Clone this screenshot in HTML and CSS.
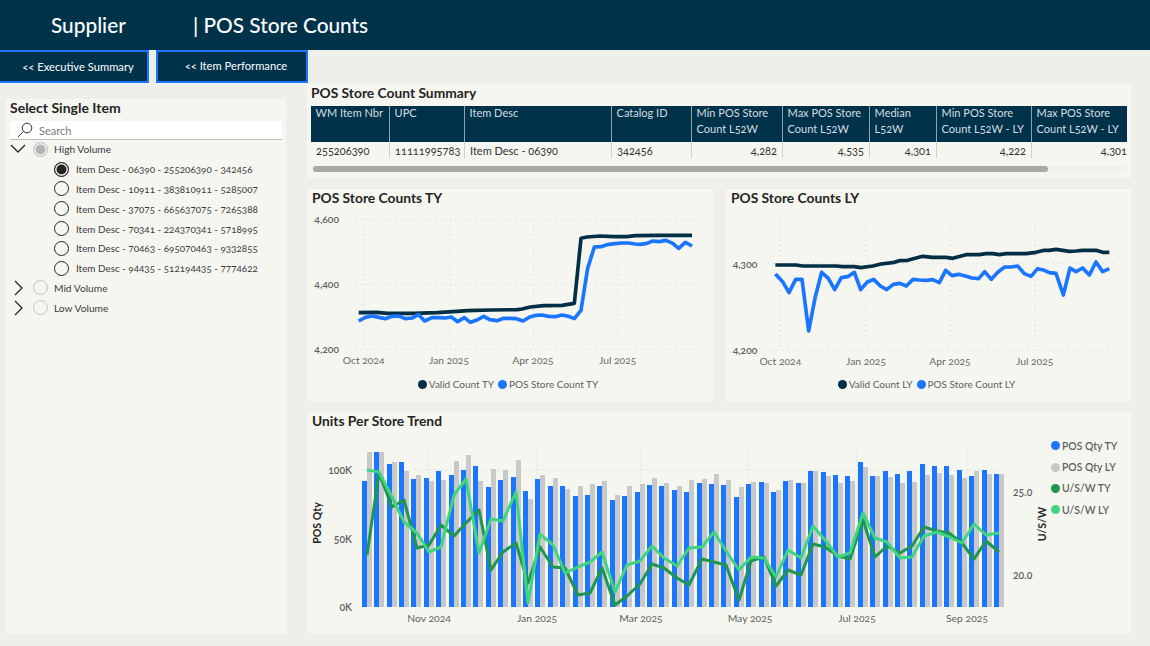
FILE: index.html
```html
<!DOCTYPE html>
<html lang="en">
<head>
<meta charset="utf-8">
<title>POS Store Counts</title>
<link rel="stylesheet" href="styles.css">
</head>
<body>
<header class="top">
  <div class="brand">Supplier</div>
  <div class="page-title">| POS Store Counts</div>
</header>
<nav class="nav">
  <a class="nav-btn nav-first">&lt;&lt; Executive Summary</a>
  <a class="nav-btn nav-second">&lt;&lt; Item Performance</a>
</nav>
<div class="content">
  <aside class="slicer">
    <h2 class="slicer-title">Select Single Item</h2>
    <div class="search">
      <svg class="search-icon" viewBox="0 0 16 16"><circle cx="10" cy="6" r="4.8"/><path d="M6.5 9.5 1 15"/></svg>
      <span>Search</span>
    </div>
    <ul class="tree">
      <li class="node"><svg class="chev" viewBox="0 0 16 16"><path d="M1 4l7 7 7-7"/></svg><span class="radio parent on"></span><span>High Volume</span></li>
      <li class="leaf"><span class="radio sel"></span><span>Item Desc - 06390 - 255206390 - 342456</span></li>
      <li class="leaf"><span class="radio"></span><span>Item Desc - 10911 - 383810911 - 5285007</span></li>
      <li class="leaf"><span class="radio"></span><span>Item Desc - 37075 - 665637075 - 7265388</span></li>
      <li class="leaf"><span class="radio"></span><span>Item Desc - 70341 - 224370341 - 5718995</span></li>
      <li class="leaf"><span class="radio"></span><span>Item Desc - 70463 - 695070463 - 9332855</span></li>
      <li class="leaf"><span class="radio"></span><span>Item Desc - 94435 - 512194435 - 7774622</span></li>
      <li class="node"><svg class="chev" viewBox="0 0 16 16"><path d="M5 1l7 7-7 7"/></svg><span class="radio parent"></span><span>Mid Volume</span></li>
      <li class="node"><svg class="chev" viewBox="0 0 16 16"><path d="M5 1l7 7-7 7"/></svg><span class="radio parent"></span><span>Low Volume</span></li>
    </ul>
  </aside>
  <main class="main">
    <section class="panel summary">
      <h2 class="panel-title">POS Store Count Summary</h2>
      <div class="table">
        <div class="th">WM Item Nbr</div><div class="th">UPC</div><div class="th">Item Desc</div><div class="th">Catalog ID</div><div class="th">Min POS Store Count L52W</div><div class="th">Max POS Store Count L52W</div><div class="th">Median L52W</div><div class="th">Min POS Store Count L52W - LY</div><div class="th">Max POS Store Count L52W - LY</div>
        <div class="td">255206390</div><div class="td num">11111995783</div><div class="td">Item Desc - 06390</div><div class="td">342456</div><div class="td num">4,282</div><div class="td num">4,535</div><div class="td num">4,301</div><div class="td num">4,222</div><div class="td num">4,301</div>
      </div>
      <div class="scroll"><div class="thumb"></div></div>
    </section>
    <div class="chart-row">
      <section class="panel chart">
        <h2 class="panel-title">POS Store Counts TY</h2>
        <svg class="plot" viewBox="0 66 1218 489">
          <path class="grid" d="M130 103H1172M130 298H1172M130 493H1172M170 103V493M428 103V493M680 103V493M932 103V493"/>
          <g class="tick tick-bold"><text x="22" y="115">4,600</text><text x="22" y="310">4,400</text><text x="22" y="505">4,200</text></g>
          <g class="tick mid"><text x="170" y="537">Oct 2024</text><text x="426" y="537">Jan 2025</text><text x="678" y="537">Apr 2025</text><text x="932" y="537">Jul 2025</text></g>
          <polyline class="ln dark" points="155,383 210,382 240,385 320,385 390,383 450,379 480,377 550,375 630,374 645,372 670,366 710,362 765,361 802,355 822,160 840,156 880,153 920,155 960,155 985,152 1050,151 1155,151"/>
          <polyline class="ln blue" points="155,408 175,397 195,393 215,397 235,401 255,394 275,393 295,401 315,399 335,389 353,408 375,398 395,398 415,399 433,396 452,410 472,398 490,412 510,405 530,394 548,404 570,407 590,400 610,400 628,401 648,408 668,396 688,391 705,390 725,394 745,395 765,390 785,394 802,401 822,376 842,250 862,186 882,185 900,179 925,176 945,174 965,174 985,177 1000,178 1020,175 1037,168 1057,170 1077,166 1097,175 1115,190 1135,172 1155,183"/>
        </svg>
        <div class="legend"><span class="dot c-dark"></span><span>Valid Count TY</span><span class="dot c-blue"></span><span>POS Store Count TY</span></div>
      </section>
      <section class="panel chart">
        <h2 class="panel-title">POS Store Counts LY</h2>
        <svg class="plot" viewBox="0 66 1215 489">
          <path class="grid" d="M125 235H1165M125 495H1165M163 105V495M420 105V495M672 105V495M926 105V495"/>
          <g class="tick tick-bold"><text x="20" y="248">4,300</text><text x="20" y="508">4,200</text></g>
          <g class="tick mid"><text x="163" y="540">Oct 2024</text><text x="420" y="540">Jan 2025</text><text x="672" y="540">Apr 2025</text><text x="926" y="540">Jul 2025</text></g>
          <polyline class="ln dark" points="148,240 210,240 230,243 330,243 350,245 385,245 405,248 440,243 465,237 505,232 520,227 545,226 590,214 620,217 660,217 680,220 720,209 760,209 780,206 800,206 820,209 840,206 900,206 930,202 955,196 970,196 990,193 1030,199 1050,198 1070,196 1110,196 1130,202 1150,202"/>
          <polyline class="ln blue" points="148,267 170,290 189,323 209,283 228,283 248,438 268,335 287,262 307,280 326,314 346,278 365,275 385,262 404,314 424,291 443,283 463,303 482,314 502,298 522,295 541,303 561,283 580,285 600,286 620,284 640,293 659,256 678,272 698,268 718,273 738,279 758,281 776,260 796,283 816,261 836,246 855,246 875,243 895,266 915,274 935,251 955,256 970,263 990,265 1012,330 1032,249 1050,260 1070,249 1090,270 1110,231 1130,260 1150,251"/>
        </svg>
        <div class="legend"><span class="dot c-dark"></span><span>Valid Count LY</span><span class="dot c-blue"></span><span>POS Store Count LY</span></div>
      </section>
    </div>
    <section class="panel trend">
      <h2 class="panel-title">Units Per Store Trend</h2>
      <div class="trend-body">
        <svg class="trend-plot" viewBox="307 430 745 203">
          <path class="grid-fine" d="M358 470H1006M358 539H1006M429 445V607M537 445V607M641 445V607M749 445V607M857 445V607M967 445V607"/>
          <g class="tock tock-bold end"><text x="352" y="474">100K</text><text x="352" y="543">50K</text><text x="352" y="611">0K</text></g>
          <g class="tock mid"><text x="429" y="622">Nov 2024</text><text x="537" y="622">Jan 2025</text><text x="641" y="622">Mar 2025</text><text x="750" y="622">May 2025</text><text x="857" y="622">Jul 2025</text><text x="967" y="622">Sep 2025</text></g>
          <g class="tock tock-bold"><text x="1013" y="496">25.0</text><text x="1013" y="579">20.0</text></g>
          <text class="axis-name" transform="translate(321 523) rotate(-90)">POS Qty</text>
          <text class="axis-name" transform="translate(1046 524) rotate(-90)">U/S/W</text>
          <path class="bars-gray" d="M369.5 452V607M381.5 452V607M394.5 462V607M406.5 471V607M418.5 475V607M431.5 481V607M443.5 480V607M456.5 461V607M468.5 455V607M480.5 481V607M493.5 469V607M505.5 470V607M518.5 460V607M530.5 499V607M542.5 475V607M555.5 478V607M567.5 489V607M580.5 486V607M592.5 484V607M604.5 481V607M617.5 495V607M629.5 486V607M642.5 484V607M654.5 478V607M666.5 483V607M679.5 486V607M691.5 480V607M704.5 479V607M716.5 474V607M728.5 480V607M741.5 487V607M753.5 482V607M766.5 483V607M778.5 490V607M790.5 480V607M803.5 483V607M815.5 471V607M828.5 476V607M840.5 483V607M852.5 481V607M865.5 467V607M877.5 476V607M890.5 477V607M902.5 483V607M914.5 482V607M927.5 475V607M939.5 473V607M951.5 475V607M964.5 478V607M976.5 471V607M989.5 474V607M1001.5 474V607"/>
          <path class="bars-blue" d="M364.5 481V607M376.5 452V607M389.5 464V607M401.5 462V607M413.5 479V607M426.5 478V607M438.5 471V607M451.5 475V607M463.5 470V607M475.5 466V607M488.5 487V607M500.5 480V607M513.5 477V607M525.5 491V607M537.5 479V607M550.5 486V607M562.5 486V607M575.5 496V607M587.5 495V607M599.5 486V607M612.5 500V607M624.5 496V607M637.5 492V607M649.5 485V607M661.5 486V607M674.5 490V607M686.5 492V607M699.5 483V607M711.5 484V607M723.5 485V607M736.5 497V607M748.5 484V607M761.5 482V607M773.5 492V607M785.5 481V607M798.5 483V607M810.5 471V607M823.5 472V607M835.5 475V607M847.5 476V607M860.5 462V607M872.5 476V607M885.5 471V607M897.5 474V607M909.5 471V607M922.5 464V607M934.5 466V607M946.5 466V607M959.5 470V607M971.5 476V607M984.5 470V607M996.5 474V607"/>
          <polyline class="ln2 g-dark" points="367,555 379,473 392,507 404,500 417,548 429,545 441,525 454,536 466,523 479,510 491,570 503,552 516,543 528,583 540,547 553,567 565,568 578,595 590,593 602,568 615,605 627,596 640,584 652,564 664,568 677,578 689,585 702,559 714,562 726,565 739,600 751,561 764,557 776,586 788,570 801,575 813,544 825,547 838,556 850,559 863,520 875,557 887,546 900,553 912,546 924,527 937,531 949,533 962,543 974,559 986,541 999,552"/>
          <polyline class="ln2 g-light" points="367,470 379,472 392,497 404,522 417,533 429,552 441,547 454,495 466,479 479,553 491,519 503,521 516,492 528,603 540,534 553,545 565,573 578,567 590,562 602,552 615,592 627,565 640,561 652,546 664,558 677,566 689,548 702,547 714,532 726,551 739,570 751,557 764,558 776,577 788,550 801,558 813,526 825,540 838,557 850,553 863,513 875,538 887,542 900,558 912,557 924,536 937,532 949,537 962,543 974,524 986,535 999,533"/>
        </svg>
        <ul class="side-legend">
          <li><span class="dot c-blue"></span>POS Qty TY</li>
          <li><span class="dot c-gray"></span>POS Qty LY</li>
          <li><span class="dot c-green"></span>U/S/W TY</li>
          <li><span class="dot c-lime"></span>U/S/W LY</li>
        </ul>
      </div>
    </section>
  </main>
</div>
</body>
</html>
```
FILE: styles.css
```css
* { box-sizing: border-box; }
html, body { margin: 0; padding: 0; }
body {
  width: 1150px;
  height: 646px;
  overflow: hidden;
  background: #eeeeea;
  color: #252423;
  font-family: "Lato", "Open Sans", sans-serif;
  font-feature-settings: "onum" 1;
  font-variant-numeric: oldstyle-nums;
}
.top {
  height: 50px;
  background: #00324a;
  color: #fff;
  display: flex;
  align-items: center;
  padding: 0 0 2px 51px;
  font-size: 20.8px;
  font-weight: 500;
}
.brand { width: 142px; }
.nav { height: 34px; display: flex; }
.nav-btn {
  height: 33px;
  background: #00324a;
  border: 2px solid #1a75ff;
  color: #fff;
  font-size: 11.2px;
  display: flex;
  align-items: center;
  justify-content: center;
}
.nav-first { width: 151px; margin-left: -2px; padding-left: 9px; }
.nav-second { width: 152px; margin-left: 7px; padding: 0 0 2px 8px; }
.content { display: flex; height: 562px; }
.slicer {
  width: 280px;
  height: 535px;
  margin: 15px 0 0 6px;
  background: #f6f6f1;
  padding: 0 4px;
}
.slicer-title { margin: 0; font-size: 14px; font-weight: 700; line-height: 18px; }
.search {
  height: 19px;
  margin-top: 4px;
  background: #fff;
  border-bottom: 1px solid #bdbdbd;
  display: flex;
  align-items: center;
  font-size: 11px;
  color: #7a7a7a;
  padding-left: 7px;
}
.search-icon { width: 16px; height: 16px; margin-right: 6px; fill: none; stroke: #333; stroke-width: 1; }
.tree { list-style: none; margin: -0.5px 0 0; padding: 0; font-size: 10.2px; color: #3a3a3a; }
.node, .leaf { height: 19.8px; display: flex; align-items: center; }
.leaf { padding-left: 44px; font-size: 9.9px; }
.chev { width: 16px; height: 16px; margin-right: 7px; fill: none; stroke: #252423; stroke-width: 1.3; flex: none; }
.radio {
  width: 15px;
  height: 15px;
  border-radius: 50%;
  border: 1.4px solid #252423;
  margin-right: 7px;
  flex: none;
}
.radio.parent { border-color: #c4c4c4; border-width: 1.5px; margin-right: 6px; }
.radio.parent.on { background: #b3b3b3; box-shadow: inset 0 0 0 1.5px #f6f6f1; }
.radio.sel { background: #252423; box-shadow: inset 0 0 0 1.5px #f6f6f1; }
.main { width: 824px; margin-left: 21px; display: flex; flex-direction: column; gap: 11px; }
.panel { background: #f6f6f1; }
.panel-title { margin: 0; padding-left: 5px; font-size: 13.8px; font-weight: 700; line-height: 18px; }
.summary { height: 94px; padding: 0 4px; }
.summary .panel-title { padding-left: 0; margin-bottom: 4px; }
.table {
  display: grid;
  grid-template-columns: 79px 75px 147px 80px 91px 87px 67px 95px 101px;
  width: 816px;
  overflow: hidden;
  font-size: 11px;
}
.th {
  height: 36px;
  background: #00324a;
  color: #d5dde2;
  border-right: 1px solid #8fa3ae;
  padding: 0 2px 0 4.6px;
  line-height: 16px;
  overflow: hidden;
}
.th::before { content: ""; display: block; margin-top: -1px; }
.td {
  height: 16px;
  line-height: 17px;
  padding: 0 5px;
  color: #333;
  border-right: 1px solid #d0d0d0;
  white-space: nowrap;
}
.td.num { text-align: right; }
.scroll { height: 6px; margin: 8px 0 0 2px; width: 813px; background: #f1f1ec; border-radius: 3px; }
.thumb { width: 735px; height: 6px; background: #aaaaa5; border-radius: 3px; }
.chart-row { display: flex; gap: 13px; }
.chart { width: 406px; height: 212px; }
.chart + .chart { width: 405px; }
.plot { display: block; width: 100%; height: 163px; }
.grid, .grid-fine { fill: none; stroke: #d0d0cc; stroke-dasharray: 1 3; }
.grid { stroke-width: 3; stroke-dasharray: 3 12; }
.tick { font-size: 31px; fill: #605e5c; }
.tick-bold { font-weight: 600; }
.mid { text-anchor: middle; fill: #6a6865; }
.ln { fill: none; stroke-width: 11; stroke-linejoin: round; }
.dark { stroke: #022f45; }
.blue { stroke: #1a75ff; }
.legend {
  margin-top: 5px;
  height: 18px;
  display: flex;
  justify-content: center;
  align-items: center;
  font-size: 10px;
  color: #605e5c;
  padding-right: 4px;
}
.dot { width: 9px; height: 9px; border-radius: 50%; margin-right: 2px; flex: none; }
.legend span:nth-child(3) { margin-left: 4px; }
.c-dark { background: #022f45; }
.c-blue { background: #1a75ff; }
.c-gray { background: #c8c8c8; }
.c-green { background: #1e9650; }
.c-lime { background: #3fd57f; }
.trend { height: 221px; }
.trend-body { display: flex; }
.trend-plot { display: block; width: 745px; height: 203px; flex: none; }
.grid-fine { stroke-width: 1; }
.tock { font-size: 10.4px; fill: #605e5c; }
.tock-bold { font-weight: 600; }
.end { text-anchor: end; }
.axis-name { font-size: 10.6px; font-weight: 700; fill: #252423; text-anchor: middle; }
.bars-gray { stroke: #c8c8c8; stroke-width: 5; fill: none; }
.bars-blue { stroke: #1a75ff; stroke-width: 5; fill: none; }
.ln2 { fill: none; stroke-width: 3; stroke-linejoin: round; }
.g-dark { stroke: #1e9650; }
.g-light { stroke: #3fd57f; }
.side-legend {
  list-style: none;
  margin: 5px 0 0 -1px;
  padding: 0;
  font-size: 10.4px;
  font-weight: 600;
  color: #605e5c;
}
.side-legend li { height: 21.4px; display: flex; align-items: center; white-space: nowrap; }
```
